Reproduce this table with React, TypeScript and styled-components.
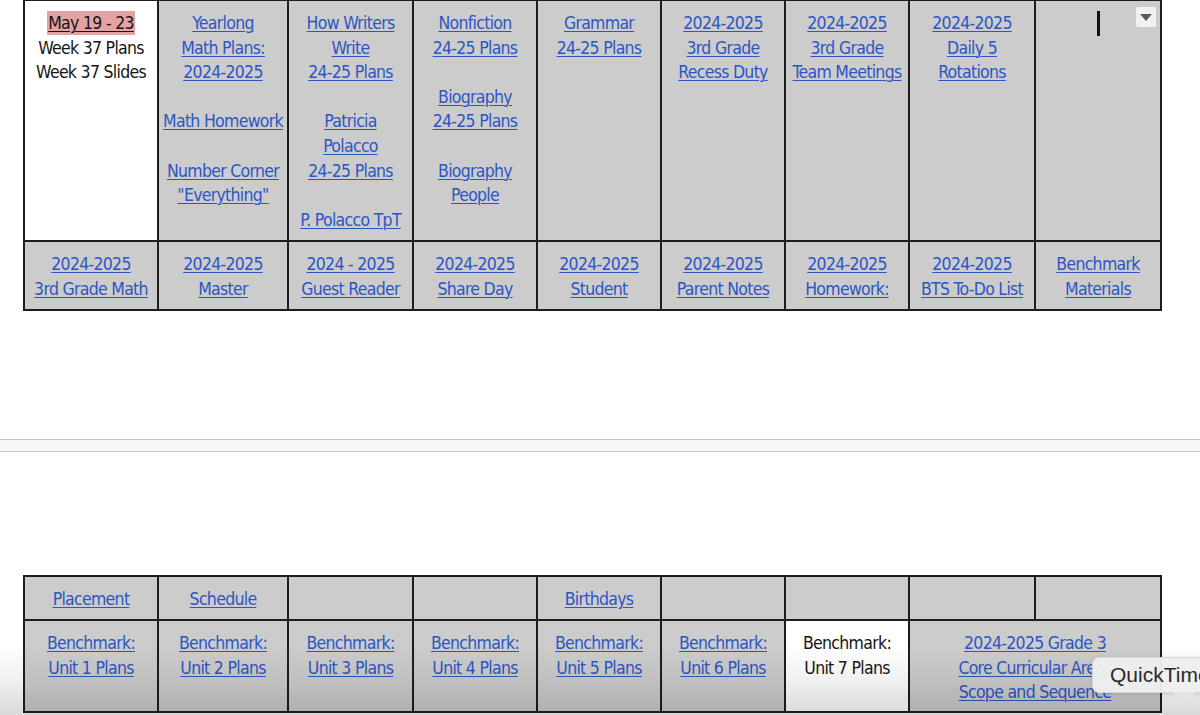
import React from "react";
import styled, { createGlobalStyle } from "styled-components";

const Global = createGlobalStyle`
  html, body { margin: 0; padding: 0; background: #ffffff; }
  body {
    width: 1200px;
    height: 715px;
    overflow: hidden;
    font-family: "DejaVu Sans Condensed", "Liberation Sans Narrow", "Liberation Sans", sans-serif;
  }
`;

const Page = styled.div`
  position: relative;
  width: 1200px;
  height: 715px;
  overflow: hidden;
  display: flex;
  flex-direction: column;
  background: #ffffff;
`;

const Grid = styled.div<{ $rows: string; $top: number }>`
  display: grid;
  grid-template-columns: 132px 128px 123px 122px 122px 122px 122px 124px 124px;
  grid-template-rows: ${(p) => p.$rows};
  gap: 2px;
  padding: 2px;
  background: #1d1d1d;
  width: max-content;
  margin-left: 23px;
  margin-top: ${(p) => p.$top}px;
`;

const Cell = styled.div<{ $white?: boolean; $span?: number }>`
  position: relative;
  background: ${(p) => (p.$white ? "#ffffff" : "#cccccc")};
  grid-column: ${(p) => (p.$span ? `span ${p.$span}` : "auto")};
  padding-top: 10px;
  display: flex;
  flex-direction: column;
  align-items: center;
  font-size: 17.5px;
  letter-spacing: -0.7px;
  line-height: 24.6px;
  overflow: hidden;
`;

const Line = styled.span<{ $link?: boolean }>`
  display: block;
  white-space: nowrap;
  height: 24.6px;
  color: ${(p) => (p.$link ? "#2d56c4" : "#151515")};
  text-decoration: ${(p) => (p.$link ? "underline" : "none")};
  text-decoration-thickness: 1px;
  text-underline-offset: 2px;
`;

const Highlight = styled.span`
  background: #e5a2a2;
  color: #151515;
  text-decoration: underline;
  text-decoration-thickness: 1px;
  text-underline-offset: 2px;
  padding: 2px 1px;
`;

const Caret = styled.div`
  position: absolute;
  left: 61px;
  top: 10px;
  width: 3px;
  height: 25px;
  background: #111;
`;

const DropButton = styled.div`
  position: absolute;
  right: 4px;
  top: 6px;
  width: 20px;
  height: 20px;
  background: #f1f1f1;
  border-radius: 2px;
  display: flex;
  align-items: center;
  justify-content: center;
`;

const Divider = styled.div`
  margin-top: 128px;
  height: 11px;
  border-top: 1px solid #c6c6ca;
  border-bottom: 1px solid #c6c6ca;
  background: #f7f8fb;
`;

const Shade = styled.div`
  position: absolute;
  left: 0;
  right: 0;
  bottom: 0;
  height: 70px;
  pointer-events: none;
  background: linear-gradient(to bottom, rgba(0, 0, 0, 0) 0%, rgba(0, 0, 0, 0.06) 50%, rgba(0, 0, 0, 0.15) 100%);
`;

const Tooltip = styled.div`
  position: absolute;
  left: 1092px;
  top: 657px;
  width: 150px;
  height: 36px;
  box-sizing: border-box;
  border-radius: 7px;
  background: rgba(238, 238, 240, 0.97);
  border: 1px solid #d6d6d8;
  box-shadow: 0 1px 4px rgba(0, 0, 0, 0.12);
  display: flex;
  align-items: center;
  padding-left: 17px;
  font-family: "Liberation Sans", Arial, sans-serif;
  font-size: 21px;
  color: #2b2b2b;
  &::after {
    content: "";
    position: absolute;
    left: 80px;
    bottom: -11px;
    border-left: 11px solid transparent;
    border-right: 11px solid transparent;
    border-top: 11px solid rgba(228, 228, 230, 0.97);
  }
`;

type CellData = { lines?: string[]; link?: boolean; white?: boolean; span?: number };

const topRow: CellData[] = [
  { lines: ["Yearlong", "Math Plans:", "2024-2025", "", "Math Homework", "", "Number Corner", "\"Everything\""], link: true },
  { lines: ["How Writers", "Write", "24-25 Plans", "", "Patricia", "Polacco", "24-25 Plans", "", "P. Polacco TpT"], link: true },
  { lines: ["Nonfiction", "24-25 Plans", "", "Biography", "24-25 Plans", "", "Biography", "People"], link: true },
  { lines: ["Grammar", "24-25 Plans"], link: true },
  { lines: ["2024-2025", "3rd Grade", "Recess Duty"], link: true },
  { lines: ["2024-2025", "3rd Grade", "Team Meetings"], link: true },
  { lines: ["2024-2025", "Daily 5", "Rotations"], link: true },
];

const secondRow: CellData[] = [
  { lines: ["2024-2025", "3rd Grade Math"], link: true },
  { lines: ["2024-2025", "Master"], link: true },
  { lines: ["2024 - 2025", "Guest Reader"], link: true },
  { lines: ["2024-2025", "Share Day"], link: true },
  { lines: ["2024-2025", "Student"], link: true },
  { lines: ["2024-2025", "Parent Notes"], link: true },
  { lines: ["2024-2025", "Homework:"], link: true },
  { lines: ["2024-2025", "BTS To-Do List"], link: true },
  { lines: ["Benchmark", "Materials"], link: true },
];

const bottomFirst: CellData[] = [
  { lines: ["Placement"], link: true },
  { lines: ["Schedule"], link: true },
  {},
  {},
  { lines: ["Birthdays"], link: true },
  {},
  {},
  {},
  {},
];

const bottomSecond: CellData[] = [
  { lines: ["Benchmark:", "Unit 1 Plans"], link: true },
  { lines: ["Benchmark:", "Unit 2 Plans"], link: true },
  { lines: ["Benchmark:", "Unit 3 Plans"], link: true },
  { lines: ["Benchmark:", "Unit 4 Plans"], link: true },
  { lines: ["Benchmark:", "Unit 5 Plans"], link: true },
  { lines: ["Benchmark:", "Unit 6 Plans"], link: true },
  { lines: ["Benchmark:", "Unit 7 Plans"], link: false, white: true },
  { lines: ["2024-2025 Grade 3", "Core Curricular Areas", "Scope and Sequence"], link: true, span: 2 },
];

const renderCell = (c: CellData, key: string) => (
  <Cell key={key} $white={c.white} $span={c.span}>
    {(c.lines || []).map((l, i) =>
      l === "" ? (
        <Line key={i}>{"\u00a0"}</Line>
      ) : (
        <Line key={i} $link={c.link}>
          {l}
        </Line>
      )
    )}
  </Cell>
);

export default function App() {
  return (
    <Page>
      <Global />
      <Grid $rows="239px 67px" $top={-1}>
        <Cell $white>
          <Line>
            <Highlight>May 19 - 23</Highlight>
          </Line>
          <Line>Week 37 Plans</Line>
          <Line>Week 37 Slides</Line>
        </Cell>
        {topRow.map((c, i) => renderCell(c, `t${i}`))}
        <Cell>
          <Caret />
          <DropButton>
            <svg width="12" height="7" viewBox="0 0 12 7">
              <path d="M0 0 L12 0 L6 7 Z" fill="#5a5a5a" />
            </svg>
          </DropButton>
        </Cell>
        {secondRow.map((c, i) => renderCell(c, `s${i}`))}
      </Grid>
      <Divider />
      <Grid $rows="42px 90px" $top={123}>
        {bottomFirst.map((c, i) => renderCell(c, `b${i}`))}
        {bottomSecond.map((c, i) => renderCell(c, `c${i}`))}
      </Grid>
      <Shade />
      <Tooltip>QuickTime</Tooltip>
    </Page>
  );
}
